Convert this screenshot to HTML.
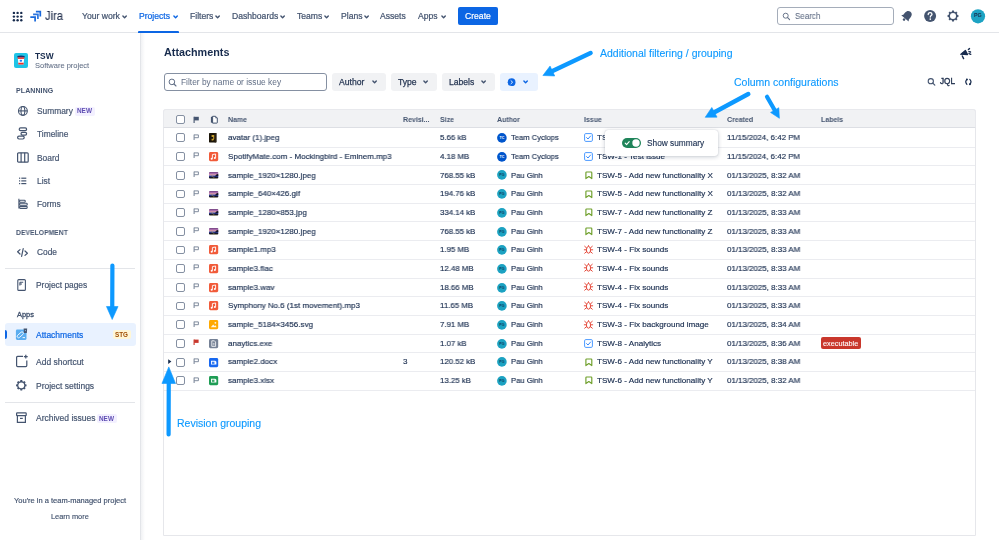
<!DOCTYPE html>
<html><head><meta charset="utf-8"><style>
html,body{margin:0;padding:0;}
body{width:999px;height:540px;overflow:hidden;position:relative;background:#fff;font-family:'Liberation Sans', sans-serif;}
.t{position:absolute;white-space:nowrap;line-height:1;font-family:'Liberation Sans', sans-serif;will-change:transform;}
svg{overflow:visible}
</style></head><body>
<div style="position:absolute;left:0.00px;top:32.00px;width:999.00px;height:1.00px;background:#E3E5E9"></div>
<svg style="position:absolute;left:0.00px;top:0.00px" width="30" height="30" viewBox="0 0 30 30"><circle cx="13.90" cy="12.90" r="1.2" fill="#172B4D"/><circle cx="13.90" cy="16.60" r="1.2" fill="#172B4D"/><circle cx="13.90" cy="20.30" r="1.2" fill="#172B4D"/><circle cx="17.60" cy="12.90" r="1.2" fill="#172B4D"/><circle cx="17.60" cy="16.60" r="1.2" fill="#172B4D"/><circle cx="17.60" cy="20.30" r="1.2" fill="#172B4D"/><circle cx="21.30" cy="12.90" r="1.2" fill="#172B4D"/><circle cx="21.30" cy="16.60" r="1.2" fill="#172B4D"/><circle cx="21.30" cy="20.30" r="1.2" fill="#172B4D"/></svg>
<svg style="position:absolute;left:27.00px;top:8.00px" width="18" height="16" viewBox="0 0 18 16"><g fill="none" stroke="#1868DB" stroke-width="1.7" stroke-linejoin="miter"><path d="M8.9 3.6 H13.3 V8.6"/><path d="M6.1 6.4 H10.9 V11.0" opacity="0.92"/><path d="M3.3 9.1 H8.1 V13.6"/></g></svg>
<div class="t" style="left:45.00px;top:9.56px;font-size:12.8px;color:#1E2B4A;font-weight:400;transform:scaleX(0.87);transform-origin:0 0;-webkit-text-stroke:0.1px #1E2B4A;">Jira</div>
<div class="t" style="left:81.90px;top:11.72px;font-size:8.6px;color:#44546F;font-weight:400;-webkit-text-stroke:0.22px #44546F;">Your work</div>
<svg style="position:absolute;left:122.20px;top:14.60px" width="6" height="4" viewBox="0 0 6 4"><path d="M0.9 0.9 L2.60 2.7 L4.30 0.9" fill="none" stroke="#44546F" stroke-width="1.4" stroke-linecap="round" stroke-linejoin="round"/></svg>
<div class="t" style="left:138.80px;top:11.72px;font-size:8.6px;color:#0C66E4;font-weight:400;-webkit-text-stroke:0.22px #0C66E4;">Projects</div>
<svg style="position:absolute;left:172.80px;top:14.60px" width="6" height="4" viewBox="0 0 6 4"><path d="M0.9 0.9 L2.60 2.7 L4.30 0.9" fill="none" stroke="#0C66E4" stroke-width="1.4" stroke-linecap="round" stroke-linejoin="round"/></svg>
<div class="t" style="left:189.60px;top:11.72px;font-size:8.6px;color:#44546F;font-weight:400;-webkit-text-stroke:0.22px #44546F;">Filters</div>
<svg style="position:absolute;left:215.20px;top:14.60px" width="6" height="4" viewBox="0 0 6 4"><path d="M0.9 0.9 L2.60 2.7 L4.30 0.9" fill="none" stroke="#44546F" stroke-width="1.4" stroke-linecap="round" stroke-linejoin="round"/></svg>
<div class="t" style="left:231.70px;top:11.72px;font-size:8.6px;color:#44546F;font-weight:400;-webkit-text-stroke:0.22px #44546F;">Dashboards</div>
<svg style="position:absolute;left:280.20px;top:14.60px" width="6" height="4" viewBox="0 0 6 4"><path d="M0.9 0.9 L2.60 2.7 L4.30 0.9" fill="none" stroke="#44546F" stroke-width="1.4" stroke-linecap="round" stroke-linejoin="round"/></svg>
<div class="t" style="left:297.00px;top:11.72px;font-size:8.6px;color:#44546F;font-weight:400;-webkit-text-stroke:0.22px #44546F;">Teams</div>
<svg style="position:absolute;left:324.20px;top:14.60px" width="6" height="4" viewBox="0 0 6 4"><path d="M0.9 0.9 L2.60 2.7 L4.30 0.9" fill="none" stroke="#44546F" stroke-width="1.4" stroke-linecap="round" stroke-linejoin="round"/></svg>
<div class="t" style="left:340.70px;top:11.72px;font-size:8.6px;color:#44546F;font-weight:400;-webkit-text-stroke:0.22px #44546F;">Plans</div>
<svg style="position:absolute;left:363.60px;top:14.60px" width="6" height="4" viewBox="0 0 6 4"><path d="M0.9 0.9 L2.60 2.7 L4.30 0.9" fill="none" stroke="#44546F" stroke-width="1.4" stroke-linecap="round" stroke-linejoin="round"/></svg>
<div class="t" style="left:380.30px;top:11.72px;font-size:8.6px;color:#44546F;font-weight:400;-webkit-text-stroke:0.22px #44546F;">Assets</div>
<div class="t" style="left:418.00px;top:11.72px;font-size:8.6px;color:#44546F;font-weight:400;-webkit-text-stroke:0.22px #44546F;">Apps</div>
<svg style="position:absolute;left:440.70px;top:14.60px" width="6" height="4" viewBox="0 0 6 4"><path d="M0.9 0.9 L2.60 2.7 L4.30 0.9" fill="none" stroke="#44546F" stroke-width="1.4" stroke-linecap="round" stroke-linejoin="round"/></svg>
<div style="position:absolute;left:137.50px;top:30.60px;width:41.30px;height:2.20px;background:#0C66E4;border-radius:1px 1px 0 0"></div>
<div style="position:absolute;left:458.00px;top:6.70px;width:39.60px;height:18.60px;background:#0C66E4;border-radius:2px"></div>
<div class="t" style="left:464.70px;top:11.72px;font-size:8.6px;color:#FFFFFF;font-weight:400;-webkit-text-stroke:0.2px #fff;">Create</div>
<div style="position:absolute;left:777.20px;top:6.50px;width:116.40px;height:18.90px;box-sizing:border-box;border:1px solid #A5ADBA;border-radius:3px;background:#fff"></div>
<svg style="position:absolute;left:782.00px;top:12.00px" width="9" height="9" viewBox="0 0 9 9"><circle cx="3.7" cy="3.7" r="2.5" fill="none" stroke="#626F86" stroke-width="0.95"/><path d="M5.6 5.6 L7.6 7.6" stroke="#626F86" stroke-width="1.05" stroke-linecap="round"/></svg>
<div class="t" style="left:795.40px;top:12.14px;font-size:8.7px;color:#626F86;font-weight:400;transform:scaleX(0.92);transform-origin:0 0;-webkit-text-stroke:0.1px #626F86;">Search</div>
<svg style="position:absolute;left:900.00px;top:9.00px" width="14" height="14" viewBox="0 0 14 14"><g transform="rotate(40 7 7)" fill="#44546F"><path d="M7 1.6 C4.6 1.6 3.4 3.4 3.4 5.6 V8.4 L2.2 10.2 H11.8 L10.6 8.4 V5.6 C10.6 3.4 9.4 1.6 7 1.6 Z"/><circle cx="7" cy="11.6" r="1.3"/></g></svg>
<svg style="position:absolute;left:923.00px;top:9.00px" width="14" height="14" viewBox="0 0 14 14"><circle cx="7.1" cy="7.1" r="6" fill="#44546F"/><path d="M5.2 5.6 C5.2 4.3 6.1 3.6 7.1 3.6 C8.2 3.6 9.0 4.3 9.0 5.3 C9.0 6.5 7.3 6.7 7.3 8.0" fill="none" stroke="#fff" stroke-width="1.3" stroke-linecap="round"/><circle cx="7.3" cy="10.1" r="0.85" fill="#fff"/></svg>
<svg style="position:absolute;left:946.00px;top:9.00px" width="14" height="14" viewBox="0 0 14 14"><path d="M11.23 5.78 L12.42 6.08 L12.42 7.92 L11.23 8.22 L10.85 9.13 L11.48 10.18 L10.18 11.48 L9.13 10.85 L8.22 11.23 L7.92 12.42 L6.08 12.42 L5.78 11.23 L4.87 10.85 L3.82 11.48 L2.52 10.18 L3.15 9.13 L2.77 8.22 L1.58 7.92 L1.58 6.08 L2.77 5.78 L3.15 4.87 L2.52 3.82 L3.82 2.52 L4.87 3.15 L5.78 2.77 L6.08 1.58 L7.92 1.58 L8.22 2.77 L9.13 3.15 L10.18 2.52 L11.48 3.82 L10.85 4.87 Z" fill="#44546F"/><circle cx="7" cy="7" r="3.0" fill="#fff"/></svg>
<svg style="position:absolute;left:970.00px;top:8.50px" width="15" height="15" viewBox="0 0 15 15"><circle cx="8.0" cy="7.3" r="7.1" fill="#1DA3C3"/></svg>
<div class="t" style="left:973.90px;top:13.23px;font-size:5.4px;color:#172B4D;font-weight:700;">PG</div>
<div style="position:absolute;left:140.00px;top:33.00px;width:1.00px;height:507.00px;background:#E3E5E9"></div>
<div style="position:absolute;left:141.00px;top:33.00px;width:4.00px;height:507.00px;background:linear-gradient(to right, rgba(9,30,66,0.06), rgba(9,30,66,0))"></div>
<div style="position:absolute;left:14.10px;top:53.30px;width:14.00px;height:14.40px;background:#1FC4E6;border-radius:2px"></div>
<svg style="position:absolute;left:14.10px;top:53.30px" width="14" height="14.4" viewBox="0 0 14 14.4"><path d="M3.8 4.4 H10.2 L9.6 11.6 H4.4 Z" fill="#fff"/><path d="M3.4 3.0 Q7 2.2 10.6 3.0 V4.4 H3.4 Z" fill="#1E2B6A"/><rect x="3.7" y="4.4" width="6.6" height="1.5" fill="#F0302A"/><path d="M4.2 9.7 H9.8 L9.6 11.6 H4.4 Z" fill="#F0302A"/><ellipse cx="6.9" cy="7.8" rx="1.3" ry="1.0" fill="#1D7AFC"/></svg>
<div class="t" style="left:35.30px;top:52.39px;font-size:8.4px;color:#172B4D;font-weight:700;">TSW</div>
<div class="t" style="left:35.30px;top:61.65px;font-size:7.5px;color:#626F86;font-weight:400;-webkit-text-stroke:0.06px #626F86;">Software project</div>
<div class="t" style="left:16.00px;top:87.37px;font-size:7.0px;color:#44546F;font-weight:700;letter-spacing:0.1px">PLANNING</div>
<div class="t" style="left:36.70px;top:106.79px;font-size:8.4px;color:#44546F;font-weight:400;-webkit-text-stroke:0.18px #44546F;">Summary</div>
<div class="t" style="left:36.70px;top:129.89px;font-size:8.4px;color:#44546F;font-weight:400;-webkit-text-stroke:0.18px #44546F;">Timeline</div>
<div class="t" style="left:36.70px;top:153.89px;font-size:8.4px;color:#44546F;font-weight:400;-webkit-text-stroke:0.18px #44546F;">Board</div>
<div class="t" style="left:36.70px;top:176.79px;font-size:8.4px;color:#44546F;font-weight:400;-webkit-text-stroke:0.18px #44546F;">List</div>
<div class="t" style="left:36.70px;top:200.29px;font-size:8.4px;color:#44546F;font-weight:400;-webkit-text-stroke:0.18px #44546F;">Forms</div>
<div style="position:absolute;left:75.30px;top:106.70px;width:19.50px;height:8.90px;background:#F3F0FF;border-radius:2px"></div>
<div class="t" style="left:77.00px;top:108.48px;font-size:6.4px;color:#5E4DB2;font-weight:700;">NEW</div>
<svg style="position:absolute;left:17.00px;top:105.00px" width="12" height="12" viewBox="0 0 12 12"><g fill="none" stroke="#44546F" stroke-width="1.1"><circle cx="5.9" cy="5.9" r="4.4"/><ellipse cx="5.9" cy="5.9" rx="1.9" ry="4.4"/><path d="M1.5 5.9 H10.3"/></g></svg>
<svg style="position:absolute;left:16.00px;top:126.00px" width="14" height="15" viewBox="0 0 14 15"><g fill="none" stroke="#44546F" stroke-width="1.2"><rect x="3.2" y="1.8" width="7.4" height="2.8" rx="1.4"/><rect x="5.0" y="6.3" width="5.6" height="2.8" rx="1.4"/><rect x="1.6" y="10.2" width="6.6" height="2.8" rx="1.4"/></g></svg>
<svg style="position:absolute;left:16.00px;top:151.00px" width="14" height="12" viewBox="0 0 14 12"><g fill="none" stroke="#44546F" stroke-width="1.2"><rect x="1.6" y="1.8" width="10.6" height="9.4" rx="1"/><path d="M5.1 1.8 V11.2 M8.7 1.8 V11.2"/></g></svg>
<svg style="position:absolute;left:17.00px;top:176.00px" width="12" height="10" viewBox="0 0 12 10"><g fill="#44546F"><rect x="2" y="1.6" width="1.2" height="1.2"/><rect x="2" y="4.3" width="1.2" height="1.2"/><rect x="2" y="7" width="1.2" height="1.2"/><rect x="4.3" y="1.6" width="5" height="1.2"/><rect x="4.3" y="4.3" width="5" height="1.2"/><rect x="4.3" y="7" width="5" height="1.2"/></g></svg>
<svg style="position:absolute;left:17.00px;top:198.00px" width="12" height="12" viewBox="0 0 12 12"><g fill="none" stroke="#44546F" stroke-width="1.1"><path d="M1.9 0.8 V10.6"/><rect x="2.6" y="2.2" width="5.6" height="2.0" rx="0.8"/><rect x="2.6" y="5.3" width="7.6" height="2.0" rx="0.8"/><rect x="2.6" y="8.4" width="7.6" height="2.0" rx="0.8"/></g></svg>
<div class="t" style="left:15.80px;top:229.27px;font-size:7.0px;color:#44546F;font-weight:700;letter-spacing:0.1px;transform:scaleX(0.955);transform-origin:0 0;">DEVELOPMENT</div>
<svg style="position:absolute;left:16.00px;top:247.00px" width="13" height="11" viewBox="0 0 13 11"><g fill="none" stroke="#44546F" stroke-width="1.2" stroke-linecap="round" stroke-linejoin="round"><path d="M4.0 2.6 L1.6 4.8 L4.0 7.0"/><path d="M9.0 4.0 L11.4 6.2 L9.0 8.4"/><path d="M7.2 1.6 L5.6 9.4"/></g></svg>
<div class="t" style="left:36.80px;top:248.39px;font-size:8.4px;color:#44546F;font-weight:400;-webkit-text-stroke:0.18px #44546F;">Code</div>
<div style="position:absolute;left:4.80px;top:268.00px;width:130.20px;height:1.00px;background:#E3E5E9"></div>
<svg style="position:absolute;left:16.00px;top:278.00px" width="11" height="14" viewBox="0 0 11 14"><g fill="none" stroke="#44546F" stroke-width="1.1"><rect x="1.8" y="1.6" width="7.6" height="10.8" rx="1"/><path d="M3.9 4.3 H7.2 M3.9 6.0 H6.0 M3.9 4.3 V7.6"/></g></svg>
<div class="t" style="left:35.70px;top:281.29px;font-size:8.4px;color:#44546F;font-weight:400;-webkit-text-stroke:0.18px #44546F;">Project pages</div>
<div class="t" style="left:17.30px;top:311.34px;font-size:7.4px;color:#44546F;font-weight:400;-webkit-text-stroke:0.35px #44546F;">Apps</div>
<div style="position:absolute;left:4.80px;top:322.80px;width:130.80px;height:23.00px;background:#E9F2FF;border-radius:3px"></div>
<div style="position:absolute;left:4.50px;top:329.50px;width:2.30px;height:9.50px;background:#0C66E4;border-radius:0 2px 2px 0"></div>
<svg style="position:absolute;left:15.00px;top:328.00px" width="14" height="13" viewBox="0 0 14 13"><rect x="0.9" y="1.6" width="10.6" height="10.3" rx="1.3" fill="#5AADF0"/><rect x="1.6" y="5.4" width="7.4" height="2.8" rx="1.4" transform="rotate(-42 5.3 6.8)" fill="none" stroke="#fff" stroke-width="0.8"/><path d="M7.6 9.6 H10.0" stroke="#fff" stroke-width="0.9"/><path d="M8.6 0.4 H12.2 L11.8 4.9 H9.0 Z" fill="#44546F"/><circle cx="10.4" cy="2.6" r="0.6" fill="#8FB8E0"/></svg>
<div class="t" style="left:35.70px;top:330.50px;font-size:8.5px;color:#0C66E4;font-weight:400;-webkit-text-stroke:0.2px #0C66E4;">Attachments</div>
<div style="position:absolute;left:113.00px;top:330.00px;width:17.60px;height:8.80px;background:#FFF7D6;border-radius:2px"></div>
<div class="t" style="left:114.60px;top:331.77px;font-size:6.3px;color:#9E4C00;font-weight:700;">STG</div>
<svg style="position:absolute;left:15.00px;top:354.00px" width="14" height="14" viewBox="0 0 14 14"><g fill="none" stroke="#44546F" stroke-width="1.2"><path d="M8.0 2.4 H2.6 A1 1 0 0 0 1.6 3.4 V11.6 A1 1 0 0 0 2.6 12.6 H10.8 A1 1 0 0 0 11.8 11.6 V6.6"/><path d="M10.8 0.8 V4.6 M8.9 2.7 H12.7"/></g></svg>
<div class="t" style="left:35.70px;top:357.80px;font-size:8.5px;color:#44546F;font-weight:400;-webkit-text-stroke:0.18px #44546F;">Add shortcut</div>
<svg style="position:absolute;left:15.00px;top:379.00px" width="13" height="13" viewBox="0 0 13 13"><path d="M10.34 5.14 L11.53 5.41 L11.53 7.19 L10.34 7.46 L9.97 8.33 L10.62 9.37 L9.37 10.62 L8.33 9.97 L7.46 10.34 L7.19 11.53 L5.41 11.53 L5.14 10.34 L4.27 9.97 L3.23 10.62 L1.98 9.37 L2.63 8.33 L2.26 7.46 L1.07 7.19 L1.07 5.41 L2.26 5.14 L2.63 4.27 L1.98 3.23 L3.23 1.98 L4.27 2.63 L5.14 2.26 L5.41 1.07 L7.19 1.07 L7.46 2.26 L8.33 2.63 L9.37 1.98 L10.62 3.23 L9.97 4.27 Z" fill="#44546F"/><circle cx="6.3" cy="6.3" r="2.9" fill="#fff"/></svg>
<div class="t" style="left:35.70px;top:381.80px;font-size:8.5px;color:#44546F;font-weight:400;-webkit-text-stroke:0.18px #44546F;">Project settings</div>
<div style="position:absolute;left:4.80px;top:402.00px;width:130.20px;height:1.00px;background:#E3E5E9"></div>
<svg style="position:absolute;left:15.00px;top:411.00px" width="13" height="13" viewBox="0 0 13 13"><g fill="none" stroke="#44546F" stroke-width="1.2"><rect x="1.6" y="1.8" width="9.6" height="2.8" rx="0.6"/><path d="M2.4 4.6 V11.4 H10.4 V4.6"/><path d="M5.0 7.4 H7.8"/></g></svg>
<div class="t" style="left:35.70px;top:413.80px;font-size:8.5px;color:#44546F;font-weight:400;-webkit-text-stroke:0.18px #44546F;">Archived issues</div>
<div style="position:absolute;left:97.30px;top:414.00px;width:19.80px;height:8.90px;background:#F3F0FF;border-radius:2px"></div>
<div class="t" style="left:99.00px;top:415.78px;font-size:6.4px;color:#5E4DB2;font-weight:700;">NEW</div>
<div class="t" style="left:14.30px;top:496.75px;font-size:7.5px;color:#44546F;font-weight:400;-webkit-text-stroke:0.18px #44546F;">You're in a team-managed project</div>
<div class="t" style="left:51.00px;top:512.74px;font-size:7.4px;color:#44546F;font-weight:400;-webkit-text-stroke:0.15px #44546F;">Learn more</div>
<div class="t" style="left:164.00px;top:46.66px;font-size:10.8px;color:#172B4D;font-weight:700;">Attachments</div>
<div style="position:absolute;left:163.60px;top:72.50px;width:163.10px;height:18.40px;box-sizing:border-box;border:1px solid #8590A2;border-radius:3px;background:#fff"></div>
<svg style="position:absolute;left:168.00px;top:78.00px" width="10" height="10" viewBox="0 0 10 10"><circle cx="3.9" cy="3.9" r="2.8" fill="none" stroke="#626F86" stroke-width="1.0"/><path d="M6.0 6.0 L8.0 8.0" stroke="#626F86" stroke-width="1.1" stroke-linecap="round"/></svg>
<div class="t" style="left:181.10px;top:78.49px;font-size:8.4px;color:#626F86;font-weight:400;">Filter by name or issue key</div>
<div style="position:absolute;left:332.00px;top:72.70px;width:53.60px;height:18.10px;background:#F1F2F4;border-radius:3px"></div>
<div class="t" style="left:339.30px;top:78.32px;font-size:8.6px;color:#273754;font-weight:400;-webkit-text-stroke:0.25px #273754;">Author</div>
<svg style="position:absolute;left:371.80px;top:80.20px" width="6" height="4" viewBox="0 0 6 4"><path d="M0.9 0.9 L2.60 2.7 L4.30 0.9" fill="none" stroke="#44546F" stroke-width="1.4" stroke-linecap="round" stroke-linejoin="round"/></svg>
<div style="position:absolute;left:390.60px;top:72.70px;width:46.70px;height:18.10px;background:#F1F2F4;border-radius:3px"></div>
<div class="t" style="left:397.70px;top:78.32px;font-size:8.6px;color:#273754;font-weight:400;-webkit-text-stroke:0.25px #273754;">Type</div>
<svg style="position:absolute;left:422.90px;top:80.20px" width="6" height="4" viewBox="0 0 6 4"><path d="M0.9 0.9 L2.60 2.7 L4.30 0.9" fill="none" stroke="#44546F" stroke-width="1.4" stroke-linecap="round" stroke-linejoin="round"/></svg>
<div style="position:absolute;left:442.20px;top:72.70px;width:52.80px;height:18.10px;background:#F1F2F4;border-radius:3px"></div>
<div class="t" style="left:449.40px;top:78.32px;font-size:8.6px;color:#273754;font-weight:400;-webkit-text-stroke:0.25px #273754;">Labels</div>
<svg style="position:absolute;left:480.80px;top:80.20px" width="6" height="4" viewBox="0 0 6 4"><path d="M0.9 0.9 L2.60 2.7 L4.30 0.9" fill="none" stroke="#44546F" stroke-width="1.4" stroke-linecap="round" stroke-linejoin="round"/></svg>
<div style="position:absolute;left:500.10px;top:72.70px;width:37.50px;height:18.10px;background:#E9F2FF;border-radius:3px"></div>
<svg style="position:absolute;left:507.00px;top:77.50px" width="10" height="10" viewBox="0 0 10 10"><circle cx="4.6" cy="4.2" r="3.9" fill="#0C66E4"/><path d="M4.0 2.7 L5.6 4.2 L4.0 5.7" fill="none" stroke="#fff" stroke-width="0.9" stroke-linecap="round"/></svg>
<svg style="position:absolute;left:522.60px;top:80.20px" width="6" height="4" viewBox="0 0 6 4"><path d="M0.9 0.9 L2.60 2.7 L4.30 0.9" fill="none" stroke="#0C66E4" stroke-width="1.4" stroke-linecap="round" stroke-linejoin="round"/></svg>
<svg style="position:absolute;left:955.00px;top:44.00px" width="22" height="18" viewBox="0 0 22 18"><path d="M5.6 10.3 L10.4 6.3 L12.6 10.6 Z" fill="#172B4D" stroke="#172B4D" stroke-width="1.1" stroke-linejoin="round"/><path d="M7.3 12.0 L8.6 14.6" stroke="#172B4D" stroke-width="1.4" stroke-linecap="round"/><g stroke="#172B4D" stroke-width="1.4" stroke-linecap="round"><path d="M13.4 5.5 L14.5 4.6 M13.9 7.6 L15.5 8.0 M14.0 9.6 L15.8 10.3"/></g></svg>
<svg style="position:absolute;left:927.00px;top:78.00px" width="10" height="8" viewBox="0 0 10 8"><circle cx="3.8" cy="3.2" r="2.6" fill="none" stroke="#44546F" stroke-width="1.1"/><path d="M5.8 5.2 L7.8 7.2" stroke="#44546F" stroke-width="1.2" stroke-linecap="round"/></svg>
<div class="t" style="left:939.60px;top:78.06px;font-size:8.2px;color:#22324F;font-weight:400;-webkit-text-stroke:0.35px #22324F;">JQL</div>
<svg style="position:absolute;left:960.00px;top:74.00px" width="18" height="16" viewBox="0 0 18 16"><g fill="none" stroke="#172B4D" stroke-width="1.2" stroke-linecap="round"><path d="M6.9 5.4 Q4.6 7.8 6.9 10.4"/><path d="M9.8 5.4 Q12.2 7.8 9.8 10.4"/></g><circle cx="6.9" cy="5.5" r="0.95" fill="#172B4D"/><circle cx="9.9" cy="10.3" r="0.95" fill="#172B4D"/></svg>
<div style="position:absolute;left:163.30px;top:109.10px;width:812.70px;height:427.40px;box-sizing:border-box;border:1px solid #E6E7EB;border-radius:3px 3px 0 0;background:#fff"></div>
<div style="position:absolute;left:163.30px;top:109.10px;width:812.70px;height:19.40px;box-sizing:border-box;border:1px solid #E8E9ED;border-bottom:1px solid #DDDFE4;border-radius:3px 3px 0 0;background:#F1F2F4"></div>
<div style="position:absolute;left:176.20px;top:115.10px;width:8.80px;height:8.80px;box-sizing:border-box;border:1.3px solid #8590A2;border-radius:2px;background:#fff"></div>
<svg style="position:absolute;left:192.50px;top:115.50px" width="8" height="8" viewBox="0 0 8 8"><path d="M1.1 0.8 V7.0" stroke="#44546F" stroke-width="1.1"/><path d="M1.1 0.8 H5.8 V4.4 H1.1 Z" fill="#44546F"/></svg>
<svg style="position:absolute;left:208.50px;top:114.50px" width="10" height="10" viewBox="0 0 10 10"><path d="M1.9 2.0 L3.6 1.3 V8.1 L1.9 7.4 Z" fill="#44546F"/><path d="M3.6 1.3 H6.6 L8.3 3.0 V7.7 Q8.3 8.1 7.9 8.1 H3.6 Z" fill="#fff" stroke="#44546F" stroke-width="1.0" stroke-linejoin="round"/><path d="M6.4 1.3 V3.2 H8.3" fill="#44546F"/></svg>
<div class="t" style="left:228.00px;top:116.02px;font-size:7.3px;color:#44546F;font-weight:700;transform:scaleX(0.96);transform-origin:0 0;">Name</div>
<div class="t" style="left:402.60px;top:116.02px;font-size:7.3px;color:#44546F;font-weight:700;transform:scaleX(0.96);transform-origin:0 0;">Revisi...</div>
<div class="t" style="left:440.40px;top:116.02px;font-size:7.3px;color:#44546F;font-weight:700;transform:scaleX(0.96);transform-origin:0 0;">Size</div>
<div class="t" style="left:496.50px;top:116.02px;font-size:7.3px;color:#44546F;font-weight:700;transform:scaleX(0.96);transform-origin:0 0;">Author</div>
<div class="t" style="left:583.80px;top:116.02px;font-size:7.3px;color:#44546F;font-weight:700;transform:scaleX(0.96);transform-origin:0 0;">Issue</div>
<div class="t" style="left:727.10px;top:116.02px;font-size:7.3px;color:#44546F;font-weight:700;transform:scaleX(0.96);transform-origin:0 0;">Created</div>
<div class="t" style="left:820.70px;top:116.02px;font-size:7.3px;color:#44546F;font-weight:700;transform:scaleX(0.96);transform-origin:0 0;">Labels</div>
<div style="position:absolute;left:164.30px;top:146.69px;width:810.70px;height:1.00px;background:#EBECF0"></div>
<div style="position:absolute;left:176.20px;top:133.45px;width:8.80px;height:8.80px;box-sizing:border-box;border:1.3px solid #8590A2;border-radius:2px;background:#fff"></div>
<svg style="position:absolute;left:192.50px;top:133.65px" width="8" height="8" viewBox="0 0 8 8"><path d="M1.1 0.6 V6.0" stroke="#758195" stroke-width="1.0"/><path d="M1.1 0.9 H5.4 V3.7 H1.1" fill="none" stroke="#758195" stroke-width="0.9"/></svg>
<svg style="position:absolute;left:209.00px;top:133.05px" width="7.4" height="9.4" viewBox="0 0 7.4 9.4"><rect width="7.4" height="9.4" rx="0.6" fill="#1A1408"/><path d="M2.6 2.0 H5.4 V5.8 L4.2 7.6 H2.6 V5.8 H4.2 V4.0 H2.6 Z" fill="#C8A030"/><rect x="5.6" y="0" width="1.8" height="9.4" fill="#2A2010"/></svg>
<div class="t" style="left:228.00px;top:134.14px;font-size:8.1px;color:#172B4D;font-weight:400;transform:scaleX(0.985);transform-origin:0 0;-webkit-text-stroke:0.16px #172B4D;">avatar (1).jpeg</div>
<div class="t" style="left:440.40px;top:134.14px;font-size:8.1px;color:#172B4D;font-weight:400;transform:scaleX(0.97);transform-origin:0 0;-webkit-text-stroke:0.16px #172B4D;">5.66 kB</div>
<svg style="position:absolute;left:497.10px;top:133.05px" width="9.8" height="9.8" viewBox="0 0 9.8 9.8"><circle cx="4.9" cy="4.9" r="4.8" fill="#0055CC"/><text x="4.9" y="6.2" font-size="3.6" font-family="Liberation Sans" font-weight="700" fill="#fff" text-anchor="middle">TC</text></svg>
<div class="t" style="left:511.10px;top:134.14px;font-size:8.1px;color:#172B4D;font-weight:400;transform:scaleX(0.94);transform-origin:0 0;-webkit-text-stroke:0.16px #172B4D;">Team Cyclops</div>
<svg style="position:absolute;left:584.00px;top:133.45px" width="9" height="9" viewBox="0 0 9 9"><rect x="0.6" y="0.6" width="7.8" height="7.8" rx="1.2" fill="#fff" stroke="#4C9AFF" stroke-width="1.0"/><path d="M2.6 4.6 L4.0 6.0 L6.6 3.0" fill="none" stroke="#1D7AFC" stroke-width="0.9" stroke-linecap="round" stroke-linejoin="round"/></svg>
<div class="t" style="left:596.60px;top:134.14px;font-size:8.1px;color:#172B4D;font-weight:400;-webkit-text-stroke:0.16px #172B4D;">TSW-1 - Test issue</div>
<div class="t" style="left:727.10px;top:134.14px;font-size:8.1px;color:#172B4D;font-weight:400;transform:scaleX(0.98);transform-origin:0 0;-webkit-text-stroke:0.16px #172B4D;">11/15/2024, 6:42 PM</div>
<div style="position:absolute;left:164.30px;top:165.38px;width:810.70px;height:1.00px;background:#EBECF0"></div>
<div style="position:absolute;left:176.20px;top:152.14px;width:8.80px;height:8.80px;box-sizing:border-box;border:1.3px solid #8590A2;border-radius:2px;background:#fff"></div>
<svg style="position:absolute;left:192.50px;top:152.34px" width="8" height="8" viewBox="0 0 8 8"><path d="M1.1 0.6 V6.0" stroke="#758195" stroke-width="1.0"/><path d="M1.1 0.9 H5.4 V3.7 H1.1" fill="none" stroke="#758195" stroke-width="0.9"/></svg>
<svg style="position:absolute;left:209.00px;top:151.94px" width="9.2" height="9.2" viewBox="0 0 9.2 9.2"><rect x="0" y="0" width="9.2" height="9.2" rx="1.4" fill="#F15B3A"/><path d="M3.4 6.6 V2.6 L6.6 2.0 V5.8" fill="none" stroke="#fff" stroke-width="0.9"/><circle cx="2.7" cy="6.7" r="1.0" fill="#fff"/><circle cx="5.9" cy="6.0" r="1.0" fill="#fff"/></svg>
<div class="t" style="left:228.00px;top:152.83px;font-size:8.1px;color:#172B4D;font-weight:400;transform:scaleX(0.985);transform-origin:0 0;-webkit-text-stroke:0.16px #172B4D;">SpotifyMate.com - Mockingbird - Eminem.mp3</div>
<div class="t" style="left:440.40px;top:152.83px;font-size:8.1px;color:#172B4D;font-weight:400;transform:scaleX(0.97);transform-origin:0 0;-webkit-text-stroke:0.16px #172B4D;">4.18 MB</div>
<svg style="position:absolute;left:497.10px;top:151.74px" width="9.8" height="9.8" viewBox="0 0 9.8 9.8"><circle cx="4.9" cy="4.9" r="4.8" fill="#0055CC"/><text x="4.9" y="6.2" font-size="3.6" font-family="Liberation Sans" font-weight="700" fill="#fff" text-anchor="middle">TC</text></svg>
<div class="t" style="left:511.10px;top:152.83px;font-size:8.1px;color:#172B4D;font-weight:400;transform:scaleX(0.94);transform-origin:0 0;-webkit-text-stroke:0.16px #172B4D;">Team Cyclops</div>
<svg style="position:absolute;left:584.00px;top:152.14px" width="9" height="9" viewBox="0 0 9 9"><rect x="0.6" y="0.6" width="7.8" height="7.8" rx="1.2" fill="#fff" stroke="#4C9AFF" stroke-width="1.0"/><path d="M2.6 4.6 L4.0 6.0 L6.6 3.0" fill="none" stroke="#1D7AFC" stroke-width="0.9" stroke-linecap="round" stroke-linejoin="round"/></svg>
<div class="t" style="left:596.60px;top:152.83px;font-size:8.1px;color:#172B4D;font-weight:400;-webkit-text-stroke:0.16px #172B4D;">TSW-1 - Test issue</div>
<div class="t" style="left:727.10px;top:152.83px;font-size:8.1px;color:#172B4D;font-weight:400;transform:scaleX(0.98);transform-origin:0 0;-webkit-text-stroke:0.16px #172B4D;">11/15/2024, 6:42 PM</div>
<div style="position:absolute;left:164.30px;top:184.07px;width:810.70px;height:1.00px;background:#EBECF0"></div>
<div style="position:absolute;left:176.20px;top:170.83px;width:8.80px;height:8.80px;box-sizing:border-box;border:1.3px solid #8590A2;border-radius:2px;background:#fff"></div>
<svg style="position:absolute;left:192.50px;top:171.03px" width="8" height="8" viewBox="0 0 8 8"><path d="M1.1 0.6 V6.0" stroke="#758195" stroke-width="1.0"/><path d="M1.1 0.9 H5.4 V3.7 H1.1" fill="none" stroke="#758195" stroke-width="0.9"/></svg>
<svg style="position:absolute;left:209.00px;top:171.83px" width="9.3" height="6.4" viewBox="0 0 9.3 6.4"><defs><linearGradient id="sk" x1="0" y1="0" x2="0" y2="1"><stop offset="0" stop-color="#6E3F7E"/><stop offset="0.3" stop-color="#B878B8"/><stop offset="0.48" stop-color="#E3A898"/><stop offset="0.62" stop-color="#3A52CC"/><stop offset="0.82" stop-color="#0E1030"/><stop offset="1" stop-color="#2A2410"/></linearGradient></defs><rect width="9.3" height="6.4" rx="0.9" fill="url(#sk)"/><path d="M5.6 4.6 L8.0 2.0 L9.3 2.2 V4.0 Z" fill="#141428"/><path d="M2.2 3.6 L5.8 6.2" stroke="#9A9040" stroke-width="0.6"/></svg>
<div class="t" style="left:228.00px;top:171.52px;font-size:8.1px;color:#172B4D;font-weight:400;transform:scaleX(0.985);transform-origin:0 0;-webkit-text-stroke:0.16px #172B4D;">sample_1920×1280.jpeg</div>
<div class="t" style="left:440.40px;top:171.52px;font-size:8.1px;color:#172B4D;font-weight:400;transform:scaleX(0.97);transform-origin:0 0;-webkit-text-stroke:0.16px #172B4D;">768.55 kB</div>
<svg style="position:absolute;left:497.10px;top:170.43px" width="9.8" height="9.8" viewBox="0 0 9.8 9.8"><circle cx="4.9" cy="4.9" r="4.8" fill="#1CA2C2"/><text x="4.9" y="6.2" font-size="3.6" font-family="Liberation Sans" font-weight="700" fill="#0E3A5C" text-anchor="middle">PG</text></svg>
<div class="t" style="left:511.10px;top:171.52px;font-size:8.1px;color:#172B4D;font-weight:400;transform:scaleX(0.94);transform-origin:0 0;-webkit-text-stroke:0.16px #172B4D;">Pau Ginh</div>
<svg style="position:absolute;left:584.00px;top:170.83px" width="9" height="9" viewBox="0 0 9 9"><path d="M1.9 7.6 V1.7 Q1.9 1.0 2.6 1.0 H7.1 Q7.8 1.0 7.8 1.7 V7.6 L4.85 5.6 Z" fill="none" stroke="#6E9F2A" stroke-width="1.15" stroke-linejoin="round"/></svg>
<div class="t" style="left:596.60px;top:171.52px;font-size:8.1px;color:#172B4D;font-weight:400;-webkit-text-stroke:0.16px #172B4D;">TSW-5 - Add new functionality X</div>
<div class="t" style="left:727.10px;top:171.52px;font-size:8.1px;color:#172B4D;font-weight:400;transform:scaleX(0.98);transform-origin:0 0;-webkit-text-stroke:0.16px #172B4D;">01/13/2025, 8:32 AM</div>
<div style="position:absolute;left:164.30px;top:202.76px;width:810.70px;height:1.00px;background:#EBECF0"></div>
<div style="position:absolute;left:176.20px;top:189.52px;width:8.80px;height:8.80px;box-sizing:border-box;border:1.3px solid #8590A2;border-radius:2px;background:#fff"></div>
<svg style="position:absolute;left:192.50px;top:189.72px" width="8" height="8" viewBox="0 0 8 8"><path d="M1.1 0.6 V6.0" stroke="#758195" stroke-width="1.0"/><path d="M1.1 0.9 H5.4 V3.7 H1.1" fill="none" stroke="#758195" stroke-width="0.9"/></svg>
<svg style="position:absolute;left:209.00px;top:190.52px" width="9.3" height="6.4" viewBox="0 0 9.3 6.4"><defs><linearGradient id="sk" x1="0" y1="0" x2="0" y2="1"><stop offset="0" stop-color="#6E3F7E"/><stop offset="0.3" stop-color="#B878B8"/><stop offset="0.48" stop-color="#E3A898"/><stop offset="0.62" stop-color="#3A52CC"/><stop offset="0.82" stop-color="#0E1030"/><stop offset="1" stop-color="#2A2410"/></linearGradient></defs><rect width="9.3" height="6.4" rx="0.9" fill="url(#sk)"/><path d="M5.6 4.6 L8.0 2.0 L9.3 2.2 V4.0 Z" fill="#141428"/><path d="M2.2 3.6 L5.8 6.2" stroke="#9A9040" stroke-width="0.6"/></svg>
<div class="t" style="left:228.00px;top:190.21px;font-size:8.1px;color:#172B4D;font-weight:400;transform:scaleX(0.985);transform-origin:0 0;-webkit-text-stroke:0.16px #172B4D;">sample_640×426.gif</div>
<div class="t" style="left:440.40px;top:190.21px;font-size:8.1px;color:#172B4D;font-weight:400;transform:scaleX(0.97);transform-origin:0 0;-webkit-text-stroke:0.16px #172B4D;">194.76 kB</div>
<svg style="position:absolute;left:497.10px;top:189.12px" width="9.8" height="9.8" viewBox="0 0 9.8 9.8"><circle cx="4.9" cy="4.9" r="4.8" fill="#1CA2C2"/><text x="4.9" y="6.2" font-size="3.6" font-family="Liberation Sans" font-weight="700" fill="#0E3A5C" text-anchor="middle">PG</text></svg>
<div class="t" style="left:511.10px;top:190.21px;font-size:8.1px;color:#172B4D;font-weight:400;transform:scaleX(0.94);transform-origin:0 0;-webkit-text-stroke:0.16px #172B4D;">Pau Ginh</div>
<svg style="position:absolute;left:584.00px;top:189.52px" width="9" height="9" viewBox="0 0 9 9"><path d="M1.9 7.6 V1.7 Q1.9 1.0 2.6 1.0 H7.1 Q7.8 1.0 7.8 1.7 V7.6 L4.85 5.6 Z" fill="none" stroke="#6E9F2A" stroke-width="1.15" stroke-linejoin="round"/></svg>
<div class="t" style="left:596.60px;top:190.21px;font-size:8.1px;color:#172B4D;font-weight:400;-webkit-text-stroke:0.16px #172B4D;">TSW-5 - Add new functionality X</div>
<div class="t" style="left:727.10px;top:190.21px;font-size:8.1px;color:#172B4D;font-weight:400;transform:scaleX(0.98);transform-origin:0 0;-webkit-text-stroke:0.16px #172B4D;">01/13/2025, 8:32 AM</div>
<div style="position:absolute;left:164.30px;top:221.45px;width:810.70px;height:1.00px;background:#EBECF0"></div>
<div style="position:absolute;left:176.20px;top:208.21px;width:8.80px;height:8.80px;box-sizing:border-box;border:1.3px solid #8590A2;border-radius:2px;background:#fff"></div>
<svg style="position:absolute;left:192.50px;top:208.41px" width="8" height="8" viewBox="0 0 8 8"><path d="M1.1 0.6 V6.0" stroke="#758195" stroke-width="1.0"/><path d="M1.1 0.9 H5.4 V3.7 H1.1" fill="none" stroke="#758195" stroke-width="0.9"/></svg>
<svg style="position:absolute;left:209.00px;top:209.21px" width="9.3" height="6.4" viewBox="0 0 9.3 6.4"><defs><linearGradient id="sk" x1="0" y1="0" x2="0" y2="1"><stop offset="0" stop-color="#6E3F7E"/><stop offset="0.3" stop-color="#B878B8"/><stop offset="0.48" stop-color="#E3A898"/><stop offset="0.62" stop-color="#3A52CC"/><stop offset="0.82" stop-color="#0E1030"/><stop offset="1" stop-color="#2A2410"/></linearGradient></defs><rect width="9.3" height="6.4" rx="0.9" fill="url(#sk)"/><path d="M5.6 4.6 L8.0 2.0 L9.3 2.2 V4.0 Z" fill="#141428"/><path d="M2.2 3.6 L5.8 6.2" stroke="#9A9040" stroke-width="0.6"/></svg>
<div class="t" style="left:228.00px;top:208.90px;font-size:8.1px;color:#172B4D;font-weight:400;transform:scaleX(0.985);transform-origin:0 0;-webkit-text-stroke:0.16px #172B4D;">sample_1280×853.jpg</div>
<div class="t" style="left:440.40px;top:208.90px;font-size:8.1px;color:#172B4D;font-weight:400;transform:scaleX(0.97);transform-origin:0 0;-webkit-text-stroke:0.16px #172B4D;">334.14 kB</div>
<svg style="position:absolute;left:497.10px;top:207.81px" width="9.8" height="9.8" viewBox="0 0 9.8 9.8"><circle cx="4.9" cy="4.9" r="4.8" fill="#1CA2C2"/><text x="4.9" y="6.2" font-size="3.6" font-family="Liberation Sans" font-weight="700" fill="#0E3A5C" text-anchor="middle">PG</text></svg>
<div class="t" style="left:511.10px;top:208.90px;font-size:8.1px;color:#172B4D;font-weight:400;transform:scaleX(0.94);transform-origin:0 0;-webkit-text-stroke:0.16px #172B4D;">Pau Ginh</div>
<svg style="position:absolute;left:584.00px;top:208.21px" width="9" height="9" viewBox="0 0 9 9"><path d="M1.9 7.6 V1.7 Q1.9 1.0 2.6 1.0 H7.1 Q7.8 1.0 7.8 1.7 V7.6 L4.85 5.6 Z" fill="none" stroke="#6E9F2A" stroke-width="1.15" stroke-linejoin="round"/></svg>
<div class="t" style="left:596.60px;top:208.90px;font-size:8.1px;color:#172B4D;font-weight:400;-webkit-text-stroke:0.16px #172B4D;">TSW-7 - Add new functionality Z</div>
<div class="t" style="left:727.10px;top:208.90px;font-size:8.1px;color:#172B4D;font-weight:400;transform:scaleX(0.98);transform-origin:0 0;-webkit-text-stroke:0.16px #172B4D;">01/13/2025, 8:33 AM</div>
<div style="position:absolute;left:164.30px;top:240.14px;width:810.70px;height:1.00px;background:#EBECF0"></div>
<div style="position:absolute;left:176.20px;top:226.90px;width:8.80px;height:8.80px;box-sizing:border-box;border:1.3px solid #8590A2;border-radius:2px;background:#fff"></div>
<svg style="position:absolute;left:192.50px;top:227.10px" width="8" height="8" viewBox="0 0 8 8"><path d="M1.1 0.6 V6.0" stroke="#758195" stroke-width="1.0"/><path d="M1.1 0.9 H5.4 V3.7 H1.1" fill="none" stroke="#758195" stroke-width="0.9"/></svg>
<svg style="position:absolute;left:209.00px;top:227.90px" width="9.3" height="6.4" viewBox="0 0 9.3 6.4"><defs><linearGradient id="sk" x1="0" y1="0" x2="0" y2="1"><stop offset="0" stop-color="#6E3F7E"/><stop offset="0.3" stop-color="#B878B8"/><stop offset="0.48" stop-color="#E3A898"/><stop offset="0.62" stop-color="#3A52CC"/><stop offset="0.82" stop-color="#0E1030"/><stop offset="1" stop-color="#2A2410"/></linearGradient></defs><rect width="9.3" height="6.4" rx="0.9" fill="url(#sk)"/><path d="M5.6 4.6 L8.0 2.0 L9.3 2.2 V4.0 Z" fill="#141428"/><path d="M2.2 3.6 L5.8 6.2" stroke="#9A9040" stroke-width="0.6"/></svg>
<div class="t" style="left:228.00px;top:227.59px;font-size:8.1px;color:#172B4D;font-weight:400;transform:scaleX(0.985);transform-origin:0 0;-webkit-text-stroke:0.16px #172B4D;">sample_1920×1280.jpeg</div>
<div class="t" style="left:440.40px;top:227.59px;font-size:8.1px;color:#172B4D;font-weight:400;transform:scaleX(0.97);transform-origin:0 0;-webkit-text-stroke:0.16px #172B4D;">768.55 kB</div>
<svg style="position:absolute;left:497.10px;top:226.50px" width="9.8" height="9.8" viewBox="0 0 9.8 9.8"><circle cx="4.9" cy="4.9" r="4.8" fill="#1CA2C2"/><text x="4.9" y="6.2" font-size="3.6" font-family="Liberation Sans" font-weight="700" fill="#0E3A5C" text-anchor="middle">PG</text></svg>
<div class="t" style="left:511.10px;top:227.59px;font-size:8.1px;color:#172B4D;font-weight:400;transform:scaleX(0.94);transform-origin:0 0;-webkit-text-stroke:0.16px #172B4D;">Pau Ginh</div>
<svg style="position:absolute;left:584.00px;top:226.90px" width="9" height="9" viewBox="0 0 9 9"><path d="M1.9 7.6 V1.7 Q1.9 1.0 2.6 1.0 H7.1 Q7.8 1.0 7.8 1.7 V7.6 L4.85 5.6 Z" fill="none" stroke="#6E9F2A" stroke-width="1.15" stroke-linejoin="round"/></svg>
<div class="t" style="left:596.60px;top:227.59px;font-size:8.1px;color:#172B4D;font-weight:400;-webkit-text-stroke:0.16px #172B4D;">TSW-7 - Add new functionality Z</div>
<div class="t" style="left:727.10px;top:227.59px;font-size:8.1px;color:#172B4D;font-weight:400;transform:scaleX(0.98);transform-origin:0 0;-webkit-text-stroke:0.16px #172B4D;">01/13/2025, 8:33 AM</div>
<div style="position:absolute;left:164.30px;top:258.83px;width:810.70px;height:1.00px;background:#EBECF0"></div>
<div style="position:absolute;left:176.20px;top:245.59px;width:8.80px;height:8.80px;box-sizing:border-box;border:1.3px solid #8590A2;border-radius:2px;background:#fff"></div>
<svg style="position:absolute;left:192.50px;top:245.79px" width="8" height="8" viewBox="0 0 8 8"><path d="M1.1 0.6 V6.0" stroke="#758195" stroke-width="1.0"/><path d="M1.1 0.9 H5.4 V3.7 H1.1" fill="none" stroke="#758195" stroke-width="0.9"/></svg>
<svg style="position:absolute;left:209.00px;top:245.39px" width="9.2" height="9.2" viewBox="0 0 9.2 9.2"><rect x="0" y="0" width="9.2" height="9.2" rx="1.4" fill="#F15B3A"/><path d="M3.4 6.6 V2.6 L6.6 2.0 V5.8" fill="none" stroke="#fff" stroke-width="0.9"/><circle cx="2.7" cy="6.7" r="1.0" fill="#fff"/><circle cx="5.9" cy="6.0" r="1.0" fill="#fff"/></svg>
<div class="t" style="left:228.00px;top:246.28px;font-size:8.1px;color:#172B4D;font-weight:400;transform:scaleX(0.985);transform-origin:0 0;-webkit-text-stroke:0.16px #172B4D;">sample1.mp3</div>
<div class="t" style="left:440.40px;top:246.28px;font-size:8.1px;color:#172B4D;font-weight:400;transform:scaleX(0.97);transform-origin:0 0;-webkit-text-stroke:0.16px #172B4D;">1.95 MB</div>
<svg style="position:absolute;left:497.10px;top:245.19px" width="9.8" height="9.8" viewBox="0 0 9.8 9.8"><circle cx="4.9" cy="4.9" r="4.8" fill="#1CA2C2"/><text x="4.9" y="6.2" font-size="3.6" font-family="Liberation Sans" font-weight="700" fill="#0E3A5C" text-anchor="middle">PG</text></svg>
<div class="t" style="left:511.10px;top:246.28px;font-size:8.1px;color:#172B4D;font-weight:400;transform:scaleX(0.94);transform-origin:0 0;-webkit-text-stroke:0.16px #172B4D;">Pau Ginh</div>
<svg style="position:absolute;left:584.00px;top:244.79px" width="10" height="10" viewBox="0 0 10 10"><g stroke="#E5493A" stroke-width="1.0" fill="none" stroke-linecap="round"><path d="M4.5 1.0 Q6.6 2.2 6.6 4.8 Q6.6 8.2 4.5 8.2 Q2.4 8.2 2.4 4.8 Q2.4 2.2 4.5 1.0 Z"/><path d="M0.7 1.3 L2.6 3.0 M8.3 1.3 L6.4 3.0 M0.3 4.8 H2.4 M8.7 4.8 H6.6 M0.7 8.2 L2.6 6.6 M8.3 8.2 L6.4 6.6"/></g></svg>
<div class="t" style="left:596.60px;top:246.28px;font-size:8.1px;color:#172B4D;font-weight:400;-webkit-text-stroke:0.16px #172B4D;">TSW-4 - Fix sounds</div>
<div class="t" style="left:727.10px;top:246.28px;font-size:8.1px;color:#172B4D;font-weight:400;transform:scaleX(0.98);transform-origin:0 0;-webkit-text-stroke:0.16px #172B4D;">01/13/2025, 8:33 AM</div>
<div style="position:absolute;left:164.30px;top:277.52px;width:810.70px;height:1.00px;background:#EBECF0"></div>
<div style="position:absolute;left:176.20px;top:264.28px;width:8.80px;height:8.80px;box-sizing:border-box;border:1.3px solid #8590A2;border-radius:2px;background:#fff"></div>
<svg style="position:absolute;left:192.50px;top:264.48px" width="8" height="8" viewBox="0 0 8 8"><path d="M1.1 0.6 V6.0" stroke="#758195" stroke-width="1.0"/><path d="M1.1 0.9 H5.4 V3.7 H1.1" fill="none" stroke="#758195" stroke-width="0.9"/></svg>
<svg style="position:absolute;left:209.00px;top:264.08px" width="9.2" height="9.2" viewBox="0 0 9.2 9.2"><rect x="0" y="0" width="9.2" height="9.2" rx="1.4" fill="#F15B3A"/><path d="M3.4 6.6 V2.6 L6.6 2.0 V5.8" fill="none" stroke="#fff" stroke-width="0.9"/><circle cx="2.7" cy="6.7" r="1.0" fill="#fff"/><circle cx="5.9" cy="6.0" r="1.0" fill="#fff"/></svg>
<div class="t" style="left:228.00px;top:264.97px;font-size:8.1px;color:#172B4D;font-weight:400;transform:scaleX(0.985);transform-origin:0 0;-webkit-text-stroke:0.16px #172B4D;">sample3.flac</div>
<div class="t" style="left:440.40px;top:264.97px;font-size:8.1px;color:#172B4D;font-weight:400;transform:scaleX(0.97);transform-origin:0 0;-webkit-text-stroke:0.16px #172B4D;">12.48 MB</div>
<svg style="position:absolute;left:497.10px;top:263.88px" width="9.8" height="9.8" viewBox="0 0 9.8 9.8"><circle cx="4.9" cy="4.9" r="4.8" fill="#1CA2C2"/><text x="4.9" y="6.2" font-size="3.6" font-family="Liberation Sans" font-weight="700" fill="#0E3A5C" text-anchor="middle">PG</text></svg>
<div class="t" style="left:511.10px;top:264.97px;font-size:8.1px;color:#172B4D;font-weight:400;transform:scaleX(0.94);transform-origin:0 0;-webkit-text-stroke:0.16px #172B4D;">Pau Ginh</div>
<svg style="position:absolute;left:584.00px;top:263.48px" width="10" height="10" viewBox="0 0 10 10"><g stroke="#E5493A" stroke-width="1.0" fill="none" stroke-linecap="round"><path d="M4.5 1.0 Q6.6 2.2 6.6 4.8 Q6.6 8.2 4.5 8.2 Q2.4 8.2 2.4 4.8 Q2.4 2.2 4.5 1.0 Z"/><path d="M0.7 1.3 L2.6 3.0 M8.3 1.3 L6.4 3.0 M0.3 4.8 H2.4 M8.7 4.8 H6.6 M0.7 8.2 L2.6 6.6 M8.3 8.2 L6.4 6.6"/></g></svg>
<div class="t" style="left:596.60px;top:264.97px;font-size:8.1px;color:#172B4D;font-weight:400;-webkit-text-stroke:0.16px #172B4D;">TSW-4 - Fix sounds</div>
<div class="t" style="left:727.10px;top:264.97px;font-size:8.1px;color:#172B4D;font-weight:400;transform:scaleX(0.98);transform-origin:0 0;-webkit-text-stroke:0.16px #172B4D;">01/13/2025, 8:33 AM</div>
<div style="position:absolute;left:164.30px;top:296.21px;width:810.70px;height:1.00px;background:#EBECF0"></div>
<div style="position:absolute;left:176.20px;top:282.97px;width:8.80px;height:8.80px;box-sizing:border-box;border:1.3px solid #8590A2;border-radius:2px;background:#fff"></div>
<svg style="position:absolute;left:192.50px;top:283.17px" width="8" height="8" viewBox="0 0 8 8"><path d="M1.1 0.6 V6.0" stroke="#758195" stroke-width="1.0"/><path d="M1.1 0.9 H5.4 V3.7 H1.1" fill="none" stroke="#758195" stroke-width="0.9"/></svg>
<svg style="position:absolute;left:209.00px;top:282.77px" width="9.2" height="9.2" viewBox="0 0 9.2 9.2"><rect x="0" y="0" width="9.2" height="9.2" rx="1.4" fill="#F15B3A"/><path d="M3.4 6.6 V2.6 L6.6 2.0 V5.8" fill="none" stroke="#fff" stroke-width="0.9"/><circle cx="2.7" cy="6.7" r="1.0" fill="#fff"/><circle cx="5.9" cy="6.0" r="1.0" fill="#fff"/></svg>
<div class="t" style="left:228.00px;top:283.66px;font-size:8.1px;color:#172B4D;font-weight:400;transform:scaleX(0.985);transform-origin:0 0;-webkit-text-stroke:0.16px #172B4D;">sample3.wav</div>
<div class="t" style="left:440.40px;top:283.66px;font-size:8.1px;color:#172B4D;font-weight:400;transform:scaleX(0.97);transform-origin:0 0;-webkit-text-stroke:0.16px #172B4D;">18.66 MB</div>
<svg style="position:absolute;left:497.10px;top:282.57px" width="9.8" height="9.8" viewBox="0 0 9.8 9.8"><circle cx="4.9" cy="4.9" r="4.8" fill="#1CA2C2"/><text x="4.9" y="6.2" font-size="3.6" font-family="Liberation Sans" font-weight="700" fill="#0E3A5C" text-anchor="middle">PG</text></svg>
<div class="t" style="left:511.10px;top:283.66px;font-size:8.1px;color:#172B4D;font-weight:400;transform:scaleX(0.94);transform-origin:0 0;-webkit-text-stroke:0.16px #172B4D;">Pau Ginh</div>
<svg style="position:absolute;left:584.00px;top:282.17px" width="10" height="10" viewBox="0 0 10 10"><g stroke="#E5493A" stroke-width="1.0" fill="none" stroke-linecap="round"><path d="M4.5 1.0 Q6.6 2.2 6.6 4.8 Q6.6 8.2 4.5 8.2 Q2.4 8.2 2.4 4.8 Q2.4 2.2 4.5 1.0 Z"/><path d="M0.7 1.3 L2.6 3.0 M8.3 1.3 L6.4 3.0 M0.3 4.8 H2.4 M8.7 4.8 H6.6 M0.7 8.2 L2.6 6.6 M8.3 8.2 L6.4 6.6"/></g></svg>
<div class="t" style="left:596.60px;top:283.66px;font-size:8.1px;color:#172B4D;font-weight:400;-webkit-text-stroke:0.16px #172B4D;">TSW-4 - Fix sounds</div>
<div class="t" style="left:727.10px;top:283.66px;font-size:8.1px;color:#172B4D;font-weight:400;transform:scaleX(0.98);transform-origin:0 0;-webkit-text-stroke:0.16px #172B4D;">01/13/2025, 8:33 AM</div>
<div style="position:absolute;left:164.30px;top:314.90px;width:810.70px;height:1.00px;background:#EBECF0"></div>
<div style="position:absolute;left:176.20px;top:301.66px;width:8.80px;height:8.80px;box-sizing:border-box;border:1.3px solid #8590A2;border-radius:2px;background:#fff"></div>
<svg style="position:absolute;left:192.50px;top:301.86px" width="8" height="8" viewBox="0 0 8 8"><path d="M1.1 0.6 V6.0" stroke="#758195" stroke-width="1.0"/><path d="M1.1 0.9 H5.4 V3.7 H1.1" fill="none" stroke="#758195" stroke-width="0.9"/></svg>
<svg style="position:absolute;left:209.00px;top:301.46px" width="9.2" height="9.2" viewBox="0 0 9.2 9.2"><rect x="0" y="0" width="9.2" height="9.2" rx="1.4" fill="#F15B3A"/><path d="M3.4 6.6 V2.6 L6.6 2.0 V5.8" fill="none" stroke="#fff" stroke-width="0.9"/><circle cx="2.7" cy="6.7" r="1.0" fill="#fff"/><circle cx="5.9" cy="6.0" r="1.0" fill="#fff"/></svg>
<div class="t" style="left:228.00px;top:302.35px;font-size:8.1px;color:#172B4D;font-weight:400;transform:scaleX(0.985);transform-origin:0 0;-webkit-text-stroke:0.16px #172B4D;">Symphony No.6 (1st movement).mp3</div>
<div class="t" style="left:440.40px;top:302.35px;font-size:8.1px;color:#172B4D;font-weight:400;transform:scaleX(0.97);transform-origin:0 0;-webkit-text-stroke:0.16px #172B4D;">11.65 MB</div>
<svg style="position:absolute;left:497.10px;top:301.26px" width="9.8" height="9.8" viewBox="0 0 9.8 9.8"><circle cx="4.9" cy="4.9" r="4.8" fill="#1CA2C2"/><text x="4.9" y="6.2" font-size="3.6" font-family="Liberation Sans" font-weight="700" fill="#0E3A5C" text-anchor="middle">PG</text></svg>
<div class="t" style="left:511.10px;top:302.35px;font-size:8.1px;color:#172B4D;font-weight:400;transform:scaleX(0.94);transform-origin:0 0;-webkit-text-stroke:0.16px #172B4D;">Pau Ginh</div>
<svg style="position:absolute;left:584.00px;top:300.86px" width="10" height="10" viewBox="0 0 10 10"><g stroke="#E5493A" stroke-width="1.0" fill="none" stroke-linecap="round"><path d="M4.5 1.0 Q6.6 2.2 6.6 4.8 Q6.6 8.2 4.5 8.2 Q2.4 8.2 2.4 4.8 Q2.4 2.2 4.5 1.0 Z"/><path d="M0.7 1.3 L2.6 3.0 M8.3 1.3 L6.4 3.0 M0.3 4.8 H2.4 M8.7 4.8 H6.6 M0.7 8.2 L2.6 6.6 M8.3 8.2 L6.4 6.6"/></g></svg>
<div class="t" style="left:596.60px;top:302.35px;font-size:8.1px;color:#172B4D;font-weight:400;-webkit-text-stroke:0.16px #172B4D;">TSW-4 - Fix sounds</div>
<div class="t" style="left:727.10px;top:302.35px;font-size:8.1px;color:#172B4D;font-weight:400;transform:scaleX(0.98);transform-origin:0 0;-webkit-text-stroke:0.16px #172B4D;">01/13/2025, 8:33 AM</div>
<div style="position:absolute;left:164.30px;top:333.59px;width:810.70px;height:1.00px;background:#EBECF0"></div>
<div style="position:absolute;left:176.20px;top:320.35px;width:8.80px;height:8.80px;box-sizing:border-box;border:1.3px solid #8590A2;border-radius:2px;background:#fff"></div>
<svg style="position:absolute;left:192.50px;top:320.55px" width="8" height="8" viewBox="0 0 8 8"><path d="M1.1 0.6 V6.0" stroke="#758195" stroke-width="1.0"/><path d="M1.1 0.9 H5.4 V3.7 H1.1" fill="none" stroke="#758195" stroke-width="0.9"/></svg>
<svg style="position:absolute;left:209.00px;top:320.15px" width="9.2" height="9.2" viewBox="0 0 9.2 9.2"><rect width="9.2" height="9.2" rx="1.4" fill="#FFA900"/><path d="M1.8 7.2 L4.2 4.6 L5.6 6.0 L6.6 5.2 L7.6 7.2 Z" fill="#fff" opacity="0.9"/><circle cx="6.4" cy="2.8" r="0.9" fill="#fff" opacity="0.9"/></svg>
<div class="t" style="left:228.00px;top:321.04px;font-size:8.1px;color:#172B4D;font-weight:400;transform:scaleX(0.985);transform-origin:0 0;-webkit-text-stroke:0.16px #172B4D;">sample_5184×3456.svg</div>
<div class="t" style="left:440.40px;top:321.04px;font-size:8.1px;color:#172B4D;font-weight:400;transform:scaleX(0.97);transform-origin:0 0;-webkit-text-stroke:0.16px #172B4D;">7.91 MB</div>
<svg style="position:absolute;left:497.10px;top:319.95px" width="9.8" height="9.8" viewBox="0 0 9.8 9.8"><circle cx="4.9" cy="4.9" r="4.8" fill="#1CA2C2"/><text x="4.9" y="6.2" font-size="3.6" font-family="Liberation Sans" font-weight="700" fill="#0E3A5C" text-anchor="middle">PG</text></svg>
<div class="t" style="left:511.10px;top:321.04px;font-size:8.1px;color:#172B4D;font-weight:400;transform:scaleX(0.94);transform-origin:0 0;-webkit-text-stroke:0.16px #172B4D;">Pau Ginh</div>
<svg style="position:absolute;left:584.00px;top:319.55px" width="10" height="10" viewBox="0 0 10 10"><g stroke="#E5493A" stroke-width="1.0" fill="none" stroke-linecap="round"><path d="M4.5 1.0 Q6.6 2.2 6.6 4.8 Q6.6 8.2 4.5 8.2 Q2.4 8.2 2.4 4.8 Q2.4 2.2 4.5 1.0 Z"/><path d="M0.7 1.3 L2.6 3.0 M8.3 1.3 L6.4 3.0 M0.3 4.8 H2.4 M8.7 4.8 H6.6 M0.7 8.2 L2.6 6.6 M8.3 8.2 L6.4 6.6"/></g></svg>
<div class="t" style="left:596.60px;top:321.04px;font-size:8.1px;color:#172B4D;font-weight:400;-webkit-text-stroke:0.16px #172B4D;">TSW-3 - Fix background image</div>
<div class="t" style="left:727.10px;top:321.04px;font-size:8.1px;color:#172B4D;font-weight:400;transform:scaleX(0.98);transform-origin:0 0;-webkit-text-stroke:0.16px #172B4D;">01/13/2025, 8:34 AM</div>
<div style="position:absolute;left:164.30px;top:352.28px;width:810.70px;height:1.00px;background:#EBECF0"></div>
<div style="position:absolute;left:176.20px;top:339.04px;width:8.80px;height:8.80px;box-sizing:border-box;border:1.3px solid #8590A2;border-radius:2px;background:#fff"></div>
<svg style="position:absolute;left:192.50px;top:339.24px" width="8" height="8" viewBox="0 0 8 8"><path d="M1.1 0.6 V6.0" stroke="#C9372C" stroke-width="1.1"/><path d="M1.1 0.6 H5.6 V3.9 H1.1 Z" fill="#C9372C"/></svg>
<svg style="position:absolute;left:209.00px;top:338.84px" width="9.2" height="9.2" viewBox="0 0 9.2 9.2"><rect width="9.2" height="9.2" rx="1.4" fill="#758195"/><path d="M2.8 1.8 H5.4 L6.6 3.0 V7.4 H2.8 Z" fill="none" stroke="#fff" stroke-width="0.8"/><path d="M3.8 4.4 H5.6 M3.8 5.8 H5.6" stroke="#fff" stroke-width="0.6"/></svg>
<div class="t" style="left:228.00px;top:339.73px;font-size:8.1px;color:#172B4D;font-weight:400;transform:scaleX(0.985);transform-origin:0 0;-webkit-text-stroke:0.16px #172B4D;">anaytics.exe</div>
<div class="t" style="left:440.40px;top:339.73px;font-size:8.1px;color:#172B4D;font-weight:400;transform:scaleX(0.97);transform-origin:0 0;-webkit-text-stroke:0.16px #172B4D;">1.07 kB</div>
<svg style="position:absolute;left:497.10px;top:338.64px" width="9.8" height="9.8" viewBox="0 0 9.8 9.8"><circle cx="4.9" cy="4.9" r="4.8" fill="#1CA2C2"/><text x="4.9" y="6.2" font-size="3.6" font-family="Liberation Sans" font-weight="700" fill="#0E3A5C" text-anchor="middle">PG</text></svg>
<div class="t" style="left:511.10px;top:339.73px;font-size:8.1px;color:#172B4D;font-weight:400;transform:scaleX(0.94);transform-origin:0 0;-webkit-text-stroke:0.16px #172B4D;">Pau Ginh</div>
<svg style="position:absolute;left:584.00px;top:339.04px" width="9" height="9" viewBox="0 0 9 9"><rect x="0.6" y="0.6" width="7.8" height="7.8" rx="1.2" fill="#fff" stroke="#4C9AFF" stroke-width="1.0"/><path d="M2.6 4.6 L4.0 6.0 L6.6 3.0" fill="none" stroke="#1D7AFC" stroke-width="0.9" stroke-linecap="round" stroke-linejoin="round"/></svg>
<div class="t" style="left:596.60px;top:339.73px;font-size:8.1px;color:#172B4D;font-weight:400;-webkit-text-stroke:0.16px #172B4D;">TSW-8 - Analytics</div>
<div class="t" style="left:727.10px;top:339.73px;font-size:8.1px;color:#172B4D;font-weight:400;transform:scaleX(0.98);transform-origin:0 0;-webkit-text-stroke:0.16px #172B4D;">01/13/2025, 8:36 AM</div>
<div style="position:absolute;left:820.80px;top:337.09px;width:40.20px;height:12.20px;background:#C9372C;border-radius:2px"></div>
<div class="t" style="left:822.90px;top:339.71px;font-size:7.3px;color:#FFFFFF;font-weight:400;-webkit-text-stroke:0.1px #fff;">executable</div>
<div style="position:absolute;left:164.30px;top:370.97px;width:810.70px;height:1.00px;background:#EBECF0"></div>
<div style="position:absolute;left:176.20px;top:357.73px;width:8.80px;height:8.80px;box-sizing:border-box;border:1.3px solid #8590A2;border-radius:2px;background:#fff"></div>
<svg style="position:absolute;left:192.50px;top:357.93px" width="8" height="8" viewBox="0 0 8 8"><path d="M1.1 0.6 V6.0" stroke="#758195" stroke-width="1.0"/><path d="M1.1 0.9 H5.4 V3.7 H1.1" fill="none" stroke="#758195" stroke-width="0.9"/></svg>
<svg style="position:absolute;left:209.00px;top:357.53px" width="9.2" height="9.2" viewBox="0 0 9.2 9.2"><rect width="9.2" height="9.2" rx="1.4" fill="#1868F0"/><path d="M2.0 2.8 H6.2 L7.4 3.8 V6.6 H2.0 Z" fill="#fff"/><rect x="2.9" y="3.7" width="2.6" height="2.2" fill="#1868F0" opacity="0.85"/></svg>
<div class="t" style="left:228.00px;top:358.42px;font-size:8.1px;color:#172B4D;font-weight:400;transform:scaleX(0.985);transform-origin:0 0;-webkit-text-stroke:0.16px #172B4D;">sample2.docx</div>
<div class="t" style="left:402.80px;top:358.42px;font-size:8.1px;color:#172B4D;font-weight:400;transform:scaleX(0.97);transform-origin:0 0;-webkit-text-stroke:0.16px #172B4D;">3</div>
<div class="t" style="left:440.40px;top:358.42px;font-size:8.1px;color:#172B4D;font-weight:400;transform:scaleX(0.97);transform-origin:0 0;-webkit-text-stroke:0.16px #172B4D;">120.52 kB</div>
<svg style="position:absolute;left:497.10px;top:357.33px" width="9.8" height="9.8" viewBox="0 0 9.8 9.8"><circle cx="4.9" cy="4.9" r="4.8" fill="#1CA2C2"/><text x="4.9" y="6.2" font-size="3.6" font-family="Liberation Sans" font-weight="700" fill="#0E3A5C" text-anchor="middle">PG</text></svg>
<div class="t" style="left:511.10px;top:358.42px;font-size:8.1px;color:#172B4D;font-weight:400;transform:scaleX(0.94);transform-origin:0 0;-webkit-text-stroke:0.16px #172B4D;">Pau Ginh</div>
<svg style="position:absolute;left:584.00px;top:357.73px" width="9" height="9" viewBox="0 0 9 9"><path d="M1.9 7.6 V1.7 Q1.9 1.0 2.6 1.0 H7.1 Q7.8 1.0 7.8 1.7 V7.6 L4.85 5.6 Z" fill="none" stroke="#6E9F2A" stroke-width="1.15" stroke-linejoin="round"/></svg>
<div class="t" style="left:596.60px;top:358.42px;font-size:8.1px;color:#172B4D;font-weight:400;-webkit-text-stroke:0.16px #172B4D;">TSW-6 - Add new functionality Y</div>
<div class="t" style="left:727.10px;top:358.42px;font-size:8.1px;color:#172B4D;font-weight:400;transform:scaleX(0.98);transform-origin:0 0;-webkit-text-stroke:0.16px #172B4D;">01/13/2025, 8:38 AM</div>
<div style="position:absolute;left:164.30px;top:389.66px;width:810.70px;height:1.00px;background:#EBECF0"></div>
<div style="position:absolute;left:176.20px;top:376.42px;width:8.80px;height:8.80px;box-sizing:border-box;border:1.3px solid #8590A2;border-radius:2px;background:#fff"></div>
<svg style="position:absolute;left:192.50px;top:376.62px" width="8" height="8" viewBox="0 0 8 8"><path d="M1.1 0.6 V6.0" stroke="#758195" stroke-width="1.0"/><path d="M1.1 0.9 H5.4 V3.7 H1.1" fill="none" stroke="#758195" stroke-width="0.9"/></svg>
<svg style="position:absolute;left:209.00px;top:376.22px" width="9.2" height="9.2" viewBox="0 0 9.2 9.2"><rect width="9.2" height="9.2" rx="1.4" fill="#1F9D55"/><path d="M2.0 2.8 H6.2 L7.4 3.8 V6.6 H2.0 Z" fill="#fff"/><rect x="2.9" y="3.7" width="2.6" height="2.2" fill="#1F9D55" opacity="0.85"/></svg>
<div class="t" style="left:228.00px;top:377.11px;font-size:8.1px;color:#172B4D;font-weight:400;transform:scaleX(0.985);transform-origin:0 0;-webkit-text-stroke:0.16px #172B4D;">sample3.xlsx</div>
<div class="t" style="left:440.40px;top:377.11px;font-size:8.1px;color:#172B4D;font-weight:400;transform:scaleX(0.97);transform-origin:0 0;-webkit-text-stroke:0.16px #172B4D;">13.25 kB</div>
<svg style="position:absolute;left:497.10px;top:376.02px" width="9.8" height="9.8" viewBox="0 0 9.8 9.8"><circle cx="4.9" cy="4.9" r="4.8" fill="#1CA2C2"/><text x="4.9" y="6.2" font-size="3.6" font-family="Liberation Sans" font-weight="700" fill="#0E3A5C" text-anchor="middle">PG</text></svg>
<div class="t" style="left:511.10px;top:377.11px;font-size:8.1px;color:#172B4D;font-weight:400;transform:scaleX(0.94);transform-origin:0 0;-webkit-text-stroke:0.16px #172B4D;">Pau Ginh</div>
<svg style="position:absolute;left:584.00px;top:376.42px" width="9" height="9" viewBox="0 0 9 9"><path d="M1.9 7.6 V1.7 Q1.9 1.0 2.6 1.0 H7.1 Q7.8 1.0 7.8 1.7 V7.6 L4.85 5.6 Z" fill="none" stroke="#6E9F2A" stroke-width="1.15" stroke-linejoin="round"/></svg>
<div class="t" style="left:596.60px;top:377.11px;font-size:8.1px;color:#172B4D;font-weight:400;-webkit-text-stroke:0.16px #172B4D;">TSW-6 - Add new functionality Y</div>
<div class="t" style="left:727.10px;top:377.11px;font-size:8.1px;color:#172B4D;font-weight:400;transform:scaleX(0.98);transform-origin:0 0;-webkit-text-stroke:0.16px #172B4D;">01/13/2025, 8:32 AM</div>
<svg style="position:absolute;left:166.50px;top:358.38px" width="6" height="8" viewBox="0 0 6 8"><path d="M1.2 1.2 L4.4 3.6 L1.2 6.0 Z" fill="#172B4D"/></svg>
<div style="position:absolute;left:604.70px;top:130.10px;width:113.10px;height:25.60px;background:#fff;border-radius:3px;box-shadow:0 1px 4px rgba(9,30,66,0.22), 0 0 1px rgba(9,30,66,0.25)"></div>
<div style="position:absolute;left:622.00px;top:137.90px;width:19.10px;height:10.10px;background:#1F845A;border-radius:5.05px"></div>
<svg style="position:absolute;left:622.00px;top:137.90px" width="19.1" height="10.1" viewBox="0 0 19.1 10.1"><circle cx="14.0" cy="5.05" r="3.7" fill="#fff"/><path d="M3.2 5.2 L4.6 6.6 L7.2 3.6" fill="none" stroke="#fff" stroke-width="1.1" stroke-linecap="round" stroke-linejoin="round"/></svg>
<div class="t" style="left:646.80px;top:139.37px;font-size:8.3px;color:#172B4D;font-weight:400;-webkit-text-stroke:0.12px #172B4D;">Show summary</div>
<div class="t" style="left:600.20px;top:48.41px;font-size:10.5px;color:#0D99FF;font-weight:400;-webkit-text-stroke:0.12px #0D99FF;">Additional filtering / grouping</div>
<div class="t" style="left:734.00px;top:77.01px;font-size:10.5px;color:#0D99FF;font-weight:400;-webkit-text-stroke:0.12px #0D99FF;">Column configurations</div>
<div class="t" style="left:176.90px;top:418.31px;font-size:10.5px;color:#0D99FF;font-weight:400;-webkit-text-stroke:0.12px #0D99FF;">Revision grouping</div>
<svg style="position:absolute;left:0.00px;top:0.00px" width="999" height="540" viewBox="0 0 999 540"><path d="M590.60 53.00 L551.49 71.45" stroke="#0D99FF" stroke-width="4.4" stroke-linecap="round"/><path d="M542.90 75.50 L550.05 66.05 L554.74 75.99 Z" fill="#0D99FF" stroke="#0D99FF" stroke-width="0.6" stroke-linejoin="round"/><path d="M748.30 94.00 L713.56 112.78" stroke="#0D99FF" stroke-width="4.4" stroke-linecap="round"/><path d="M705.20 117.30 L711.82 107.47 L717.05 117.14 Z" fill="#0D99FF" stroke="#0D99FF" stroke-width="0.6" stroke-linejoin="round"/><path d="M767.00 96.70 L775.17 110.93" stroke="#0D99FF" stroke-width="4.2" stroke-linecap="round"/><path d="M779.40 118.30 L770.55 112.43 L778.79 107.70 Z" fill="#0D99FF" stroke="#0D99FF" stroke-width="0.6" stroke-linejoin="round"/><path d="M112.40 265.50 L112.24 307.50" stroke="#0D99FF" stroke-width="4.2" stroke-linecap="round"/><path d="M112.20 319.50 L106.45 306.48 L118.05 306.52 Z" fill="#0D99FF" stroke="#0D99FF" stroke-width="0.6" stroke-linejoin="round"/><path d="M168.60 434.50 L168.75 382.50" stroke="#0D99FF" stroke-width="4.2" stroke-linecap="round"/><path d="M168.80 366.90 L175.55 383.52 L161.95 383.48 Z" fill="#0D99FF" stroke="#0D99FF" stroke-width="0.6" stroke-linejoin="round"/></svg>
</body></html>
